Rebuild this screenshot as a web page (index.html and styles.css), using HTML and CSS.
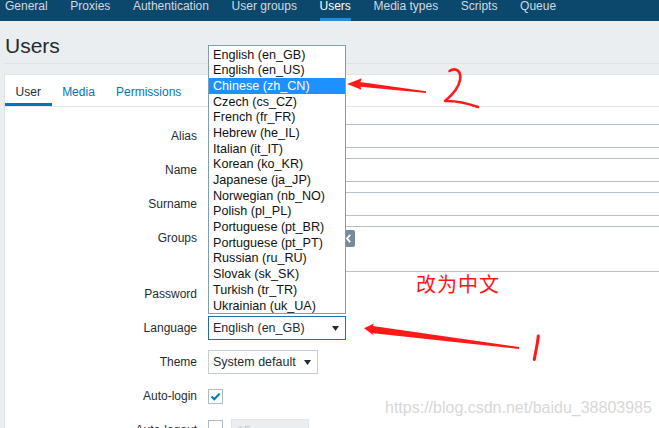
FILE: index.html
```html
<!DOCTYPE html>
<html lang="en">
<head>
<meta charset="utf-8">
<title>Users</title>
<link rel="stylesheet" href="styles.css">
</head>
<body>
<nav class="topnav">
  <a href="#">General</a>
  <a href="#">Proxies</a>
  <a href="#">Authentication</a>
  <a href="#">User groups</a>
  <a href="#" class="active">Users</a>
  <a href="#">Media types</a>
  <a href="#">Scripts</a>
  <a href="#">Queue</a>
</nav>

<header class="page-header">
  <h1>Users</h1>
</header>

<main class="panel">
  <div class="tabs">
    <div class="tab active">User</div>
    <div class="tab">Media</div>
    <div class="tab">Permissions</div>
  </div>

  <div class="form">
    <div class="label">Alias</div>
    <div class="input"></div>

    <div class="label">Name</div>
    <div class="input"></div>

    <div class="label">Surname</div>
    <div class="input"></div>

    <div class="label">Groups</div>
    <div class="multiselect">
      <div class="chip">
        <svg width="5" height="9" viewBox="0 0 5 9"><path d="M4.2 0.8 L1 4.5 L4.2 8.2" fill="none" stroke="#fff" stroke-width="1.8"/></svg>
      </div>
    </div>

    <div class="label">Password</div>
    <div class="empty"></div>

    <div class="label">Language</div>
    <div class="select select-lang">
      <span>English (en_GB)</span>
      <svg width="7" height="5" viewBox="0 0 7 5"><path d="M0 0 H7 L3.5 5 Z" fill="#1f2c33"/></svg>
    </div>

    <div class="label">Theme</div>
    <div class="select select-theme">
      <span>System default</span>
      <svg width="7" height="5" viewBox="0 0 7 5"><path d="M0 0 H7 L3.5 5 Z" fill="#1f2c33"/></svg>
    </div>

    <div class="label">Auto-login</div>
    <div class="check-cell">
      <div class="checkbox">
        <svg width="13" height="13" viewBox="0 0 13 13"><path d="M2.5 6.5 L5.3 9.3 L10.6 3.6" fill="none" stroke="#0275b8" stroke-width="2"/></svg>
      </div>
    </div>

    <div class="label">Auto-logout</div>
    <div class="check-cell logout">
      <div class="checkbox"></div>
      <div class="input-disabled">15m</div>
    </div>
  </div>
</main>

<div class="lang-list">
  <div class="opt">English (en_GB)</div>
  <div class="opt">English (en_US)</div>
  <div class="opt selected">Chinese (zh_CN)</div>
  <div class="opt">Czech (cs_CZ)</div>
  <div class="opt">French (fr_FR)</div>
  <div class="opt">Hebrew (he_IL)</div>
  <div class="opt">Italian (it_IT)</div>
  <div class="opt">Korean (ko_KR)</div>
  <div class="opt">Japanese (ja_JP)</div>
  <div class="opt">Norwegian (nb_NO)</div>
  <div class="opt">Polish (pl_PL)</div>
  <div class="opt">Portuguese (pt_BR)</div>
  <div class="opt">Portuguese (pt_PT)</div>
  <div class="opt">Russian (ru_RU)</div>
  <div class="opt">Slovak (sk_SK)</div>
  <div class="opt">Turkish (tr_TR)</div>
  <div class="opt">Ukrainian (uk_UA)</div>
</div>

<svg class="marks" width="659" height="428" viewBox="0 0 659 428">
  <!-- arrow 2 -->
  <path d="M358 81.8 L426 91.2 L426 93 L358 86.4 Z" fill="#ff1a1a"/>
  <path d="M347 84 L362 78.3 L359.5 84 L361.5 89.8 Z" fill="#ff1a1a"/>
  <path d="M449.5 71 C456 67 461.5 71 460 80 C458.5 89 451 96 445 101 C456 100.5 468 103.5 478 107" fill="none" stroke="#ff1a1a" stroke-width="2.6" stroke-linecap="round" stroke-linejoin="round"/>
  <!-- arrow 1 -->
  <path d="M371 325.8 L519 347 L519 349 L371 333 Z" fill="#ff1a1a"/>
  <path d="M364 328.3 L374 323.6 L371 329.5 L373.5 335.2 Z" fill="#ff1a1a"/>
  <path d="M538.3 336 C537.5 344 535.5 352 534.3 359.5" fill="none" stroke="#ff1a1a" stroke-width="3" stroke-linecap="round"/>
</svg>

<div class="note">改为中文</div>
<div class="watermark">https://blog.csdn.net/baidu_38803985</div>
</body>
</html>
```

FILE: styles.css
```css
html, body {
  margin: 0;
  padding: 0;
}

body {
  width: 659px;
  height: 428px;
  overflow: hidden;
  position: relative;
  background: #ebeef1;
  font-family: "Liberation Sans", Arial, sans-serif;
  font-size: 12px;
  color: #1f2c33;
}

/* top navigation */
.topnav {
  display: flex;
  gap: 22.6px;
  padding-left: 5px;
  height: 21px;
  background: #0c486b;
}

.topnav a {
  color: #cfdae3;
  text-decoration: none;
  line-height: 12px;
  height: 18px;
  border-bottom: 3px solid transparent;
  white-space: nowrap;
}

.topnav a.active {
  color: #ffffff;
  border-bottom-color: #2a8ad2;
}

/* page header */
.page-header {
  margin-left: 5px;
  padding: 13px 0 5px;
  border-bottom: 1px solid #dde2e6;
}

.page-header h1 {
  margin: 0;
  font-size: 21px;
  font-weight: normal;
  line-height: 24px;
  color: #1f2c33;
}

/* main panel */
.panel {
  margin: 10px 0 0 4px;
  height: 360px;
  background: #ffffff;
  border: 1px solid #dfe4e7;
  border-right: none;
  border-bottom: none;
}

.tabs {
  display: flex;
  border-bottom: 1px solid #e6e9ec;
}

.tab {
  padding: 11px 10.6px 0;
  height: 17px;
  line-height: 12px;
  border-bottom: 3px solid transparent;
  color: #0275b8;
  white-space: nowrap;
}

.tab.active {
  color: #1f2c33;
  border-bottom-color: #0275b8;
}

/* form grid */
.form {
  display: grid;
  grid-template-columns: 192px 480px;
  column-gap: 11px;
  row-gap: 10px;
  padding-top: 17px;
}

.label {
  text-align: right;
  line-height: 24px;
  white-space: nowrap;
}

.input {
  height: 24px;
  box-sizing: border-box;
  border: 1px solid #b5c1ca;
  background: #ffffff;
}

.multiselect {
  height: 46px;
  box-sizing: border-box;
  border: 1px solid #b5c1ca;
  padding: 3px;
}

.chip {
  width: 143px;
  height: 17px;
  box-sizing: border-box;
  background: #768d99;
  border-radius: 2px;
  display: flex;
  align-items: center;
  justify-content: flex-end;
  padding-right: 4px;
}

.empty {
  height: 24px;
}

.select {
  height: 24px;
  box-sizing: border-box;
  border: 1px solid #c5ced4;
  background: #ffffff;
  display: flex;
  align-items: center;
  justify-content: space-between;
  padding: 0 6px 0 4px;
  font-size: 12.5px;
  white-space: nowrap;
}

.select-lang {
  width: 138px;
  border-color: #1f6fa5;
}

.select-theme {
  width: 110px;
}

.check-cell {
  height: 24px;
  display: flex;
  align-items: flex-start;
}

.checkbox {
  width: 15px;
  height: 15px;
  box-sizing: border-box;
  border: 1px solid #acbbc4;
  background: #ffffff;
  margin-top: 5px;
  display: flex;
  align-items: center;
  justify-content: center;
}

.logout .checkbox {
  margin-top: 2px;
}

.input-disabled {
  margin-left: 8px;
  margin-top: 1px;
  width: 78px;
  height: 24px;
  box-sizing: border-box;
  border: 1px solid #dfe4e7;
  background: #ebeef1;
  color: #c3ccd2;
  line-height: 22px;
  padding-left: 5px;
  font-size: 12.5px;
}

/* open dropdown list (overlay) */
.lang-list {
  position: absolute;
  top: 45px;
  left: 208px;
  width: 136px;
  padding-top: 0.5px;
  border: 1px solid #7f9db9;
  background: #ffffff;
  font-size: 12.6px;
  color: #111111;
  z-index: 2;
}

.opt {
  height: 15.7px;
  line-height: 16.4px;
  padding-left: 4px;
  white-space: nowrap;
}

.opt.selected {
  background: #1e90ff;
  color: #ffffff;
}

/* annotations (overlay) */
.marks {
  position: absolute;
  top: 0;
  left: 0;
  z-index: 3;
}

.note {
  position: absolute;
  top: 273px;
  left: 416px;
  font-family: "Noto Sans CJK SC", sans-serif;
  font-size: 20px;
  line-height: 22px;
  letter-spacing: 1px;
  color: #ff1414;
  z-index: 3;
}

.watermark {
  position: absolute;
  top: 399px;
  left: 385px;
  font-size: 16px;
  line-height: 18px;
  color: #d8d8d8;
  white-space: nowrap;
  z-index: 3;
}
```
